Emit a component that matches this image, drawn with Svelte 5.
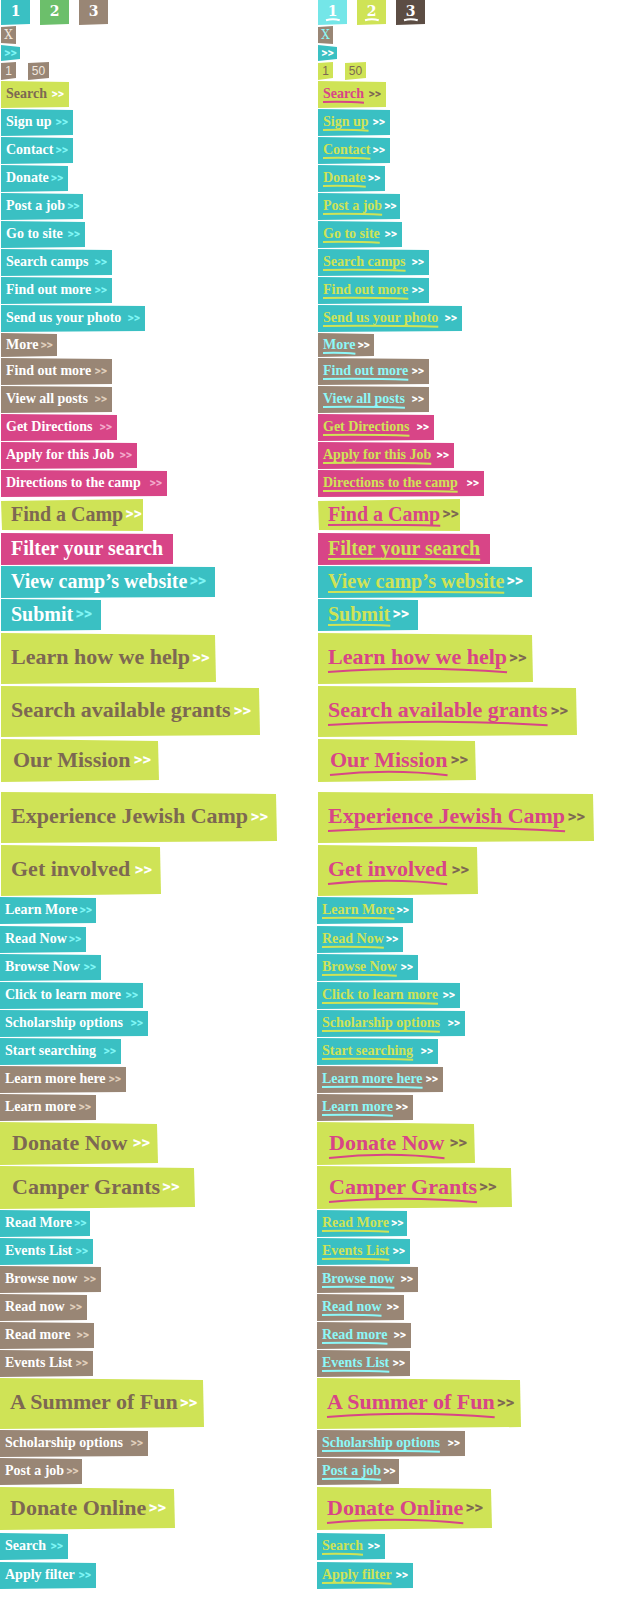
<script>
  // One entry per button: label, colour theme, size, width, and the extra space above it.
  const b = (label, theme, size, width, gap = 0, extra = '') => ({ label, theme, size, width, gap, extra });

  const numbers = [
    { label: '1', theme: 'n-teal' },
    { label: '2', theme: 'n-green' },
    { label: '3', theme: 'n-brown' }
  ];

  const first = [
    b('Search', 'lime', 'sm', 68),
    b('Sign up', 'teal', 'sm', 72),
    b('Contact', 'teal', 'sm', 72),
    b('Donate', 'teal', 'sm', 67),
    b('Post a job', 'teal', 'sm', 82),
    b('Go to site', 'teal', 'sm', 84),
    b('Search camps', 'teal', 'sm', 111),
    b('Find out more', 'teal', 'sm', 111),
    b('Send us your photo', 'teal', 'sm', 144),
    b('More', 'brown', 'xs', 56),
    b('Find out more', 'brown', 'sm', 111),
    b('View all posts', 'brown', 'sm', 111),
    b('Get Directions', 'pink', 'sm', 116),
    b('Apply for this Job', 'pink', 'sm', 136),
    b('Directions to the camp', 'pink', 'sm', 166),
    b('Find a Camp', 'lime', 'md', 142, 1, 'rise'),
    b('Filter your search', 'pink', 'md', 172, 1, 'plain'),
    b('View camp’s website', 'teal', 'md', 214),
    b('Submit', 'teal', 'md', 100),
    b('Learn how we help', 'lime', 'xl', 215, 1),
    b('Search available grants', 'lime', 'xl', 259, 1),
    b('Our Mission', 'lime', 'lg', 158, 1, 'inset'),
    b('Experience Jewish Camp', 'lime', 'xl', 276, 9),
    b('Get involved', 'lime', 'xl', 160, 1)
  ];

  const second = [
    b('Learn More', 'teal', 'sm', 96),
    b('Read Now', 'teal', 'sm', 86, 1),
    b('Browse Now', 'teal', 'sm', 101),
    b('Click to learn more', 'teal', 'sm', 143),
    b('Scholarship options', 'teal', 'sm', 148),
    b('Start searching', 'teal', 'sm', 121),
    b('Learn more here', 'brown', 'sm', 126),
    b('Learn more', 'brown', 'sm', 96),
    b('Donate Now', 'lime', 'lg', 158, 0, 'inset'),
    b('Camper Grants', 'lime', 'lg', 195, 0, 'inset wide'),
    b('Read More', 'teal', 'sm', 90),
    b('Events List', 'teal', 'sm', 93),
    b('Browse now', 'brown', 'sm', 101),
    b('Read now', 'brown', 'sm', 87),
    b('Read more', 'brown', 'sm', 94),
    b('Events List', 'brown', 'sm', 93),
    b('A Summer of Fun', 'lime', 'xl', 204),
    b('Scholarship options', 'brown', 'sm', 148),
    b('Post a job', 'brown', 'sm', 82),
    b('Donate Online', 'lime', 'lg', 175, 1),
    b('Search', 'teal', 'sm', 68, 2),
    b('Apply filter', 'teal', 'sm', 96, 1)
  ];

  const big = (size) => size === 'lg' || size === 'xl';
</script>

{#snippet button(item, active)}
  <a href="#top" class="btn {item.theme} {item.size} {item.extra}" class:active style:width="{item.width}px">
    <span class="label">{item.label}{#if active}<svg class="stroke" viewBox="0 0 100 6" preserveAspectRatio="none" aria-hidden="true">
          {#if big(item.size)}
            <path d="M0 4.8 Q52 -3 100 5.2" />
          {:else}
            <path d="M0 1.8 Q60 0.6 100 3.6" />
          {/if}
        </svg>{/if}</span>
    {#if item.extra !== 'plain'}<span class="arrow">&gt;&gt;</span>{/if}
  </a>
{/snippet}

{#snippet column(active)}
  <div class="column">
    <div class="shifted">
      <div class="numbers">
        {#each numbers as n}
          <a href="#top" class="num {n.theme}" class:active>
            <span class="label">{n.label}{#if active}<svg class="stroke" viewBox="0 0 100 6" preserveAspectRatio="none" aria-hidden="true"><path d="M0 4.4 Q50 0.6 100 4.4" /></svg>{/if}</span>
          </a>
        {/each}
      </div>
      <button type="button" class="close" class:active>X</button>
      <a href="#top" class="go" class:active>&gt;&gt;</a>
      <div class="pages">
        <a href="#top" class="page" class:active>1</a>
        <a href="#top" class="page two" class:active>50</a>
      </div>
      <ul>
        {#each first as item}
          <li style:padding-top="{item.gap}px">{@render button(item, active)}</li>
        {/each}
      </ul>
    </div>
    <ul>
      {#each second as item}
        <li style:padding-top="{item.gap}px">{@render button(item, active)}</li>
      {/each}
    </ul>
  </div>
{/snippet}

<main id="top">
  {@render column(false)}
  {@render column(true)}
</main>

<style>
  :global(body) {
    margin: 0;
    background: #fff;
  }

  main {
    display: grid;
    grid-template-columns: 1fr 1fr;
    padding-bottom: 10px;
    font-family: 'Liberation Serif', 'Times New Roman', serif;
    font-weight: 700;
  }

  .shifted {
    padding-left: 1px;
  }

  ul {
    list-style: none;
    margin: 0;
    padding: 0;
  }

  a {
    text-decoration: none;
  }

  .btn {
    display: flex;
    align-items: center;
    gap: 2px;
    box-sizing: border-box;
    margin-bottom: 1px;
    white-space: nowrap;
    color: var(--text);
    background: var(--fill);
    clip-path: polygon(0 0, 100% 1px, 100% calc(100% - 1px), 0 100%);
  }

  .label {
    position: relative;
    line-height: 1;
  }

  .arrow {
    margin-left: auto;
    font-family: Roboto, sans-serif;
    line-height: 1;
    color: var(--arrow);
  }

  .stroke {
    position: absolute;
    left: 0;
    top: 100%;
    width: 100%;
    height: 3px;
    overflow: visible;
    fill: none;
    stroke: currentColor;
    stroke-width: 2px;
  }

  .stroke path {
    vector-effect: non-scaling-stroke;
  }

  .xs,
  .sm {
    height: 27px;
    padding: 0 5px 1px;
    font-size: 14px;
  }

  .xs {
    height: 24px;
    padding-bottom: 0;
  }

  .xs .arrow,
  .sm .arrow {
    font-size: 12px;
  }

  .md {
    height: 32px;
    padding: 0 9px 3px 10px;
    font-size: 20px;
  }

  .md .arrow {
    font-size: 16px;
  }

  .rise {
    padding-right: 6px;
    clip-path: polygon(0 2px, 100% 0, 100% 100%, 1px calc(100% - 1px));
  }

  .lg,
  .xl {
    height: 51px;
    padding: 0 9px 3px 10px;
    font-size: 22px;
    clip-path: polygon(0 0, calc(100% - 1px) 2px, 100% calc(100% - 2px), 0 100%);
  }

  .lg {
    height: 43px;
    padding-bottom: 2px;
  }

  .inset {
    padding-left: 12px;
    padding-right: 8px;
  }

  .wide {
    padding-right: 16px;
  }

  .lg .arrow,
  .xl .arrow {
    font-size: 17px;
  }

  .lg .stroke,
  .xl .stroke {
    height: 5px;
  }

  .teal {
    --fill: #3ac0c3;
    --text: #fff;
    --arrow: #80f6f6;
  }

  .brown {
    --fill: #998675;
    --text: #fff;
    --arrow: #e0cfbc;
  }

  .pink {
    --fill: #d84587;
    --text: #fff;
    --arrow: #f3a9cb;
  }

  .lime {
    --fill: #cfe356;
    --text: #7d6852;
    --arrow: #fff;
  }

  .teal.active,
  .pink.active {
    --text: #cfe356;
    --arrow: #fff;
  }

  .brown.active {
    --text: #8cf8f8;
    --arrow: #fff;
  }

  .lime.active {
    --text: #d84587;
    --arrow: #7d6852;
  }

  .numbers {
    display: flex;
    gap: 10px;
    height: 26px;
  }

  .num {
    display: flex;
    justify-content: center;
    align-items: flex-start;
    width: 29px;
    height: 25px;
    box-sizing: border-box;
    padding-top: 4px;
    font-family: 'DejaVu Serif', serif;
    font-size: 14px;
    color: #fff;
    clip-path: polygon(0 0, 100% 0, 100% calc(100% - 1px), 0 100%);
  }

  .num .stroke {
    left: -2px;
    width: calc(100% + 4px);
  }

  .n-teal {
    background: #3ac0c3;
  }

  .n-green {
    background: #6cbf6b;
  }

  .n-brown {
    background: #998675;
  }

  .n-teal.active {
    background: #74e6e8;
  }

  .n-green.active {
    background: #cfe356;
  }

  .n-brown.active {
    background: #5c4d44;
  }

  .close {
    display: block;
    width: 15px;
    height: 18px;
    margin: 0 0 1px;
    padding: 0;
    border: 0;
    font-family: 'DejaVu Serif', serif;
    font-size: 12px;
    line-height: 18px;
    text-align: center;
    color: #f1e8df;
    background: #998675;
    clip-path: polygon(0 1px, 100% 0, 100% 100%, 0 calc(100% - 1px));
  }

  .close.active {
    color: #8cf8f8;
  }

  .go {
    display: block;
    width: 19px;
    height: 16px;
    margin-bottom: 1px;
    font-family: Roboto, sans-serif;
    font-size: 12px;
    line-height: 16px;
    text-align: center;
    color: #80f6f6;
    background: #3ac0c3;
    clip-path: polygon(0 0, 100% 2px, 100% calc(100% - 2px), 0 100%);
  }

  .go.active {
    color: #fff;
  }

  .pages {
    display: flex;
    gap: 12px;
    height: 19px;
  }

  .page {
    width: 15px;
    height: 18px;
    font-family: 'Liberation Sans', Arial, sans-serif;
    font-size: 12px;
    font-weight: 400;
    line-height: 18px;
    text-align: center;
    color: #f1e8df;
    background: #998675;
    clip-path: polygon(0 1px, 100% 0, 100% calc(100% - 2px), 0 100%);
  }

  .two {
    width: 21px;
  }

  .page.active {
    color: #7d6852;
    background: #cfe356;
  }
</style>
